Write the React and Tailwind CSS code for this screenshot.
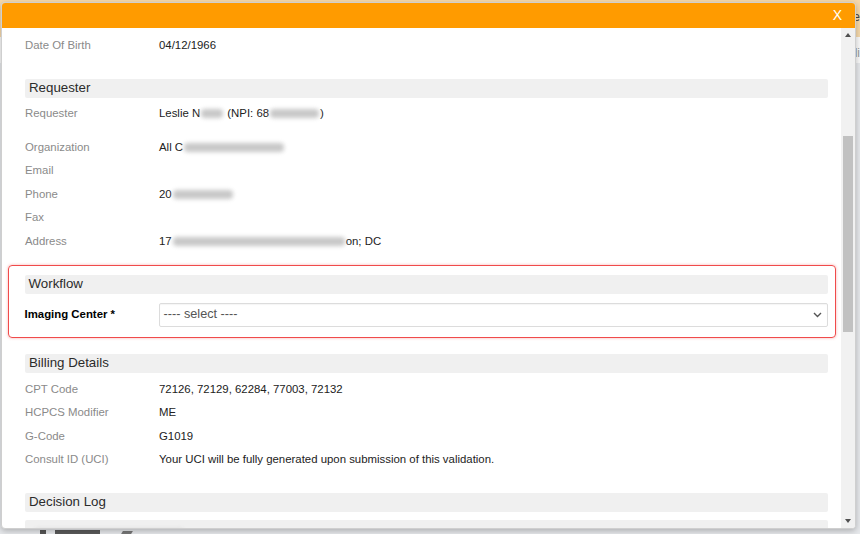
import React from "react";

const Blur = ({ w }) => (
  <span
    className="mx-[1px] inline-block h-[9px] rounded-sm bg-[#c8c8c8] align-middle blur-[2px]"
    style={{ width: w }}
  />
);

function Row({ label, children, className = "" }) {
  return (
    <div className={`flex h-[23.5px] items-center ${className}`}>
      <div className="w-[134px] shrink-0 text-[#8a8a8a]">{label}</div>
      <div className="text-[#222]">{children}</div>
    </div>
  );
}

function SectionHead({ title }) {
  return (
    <div className="flex h-[19px] items-center rounded-[2px] bg-[#f0f0f0] pl-[4px] text-[13.3px] text-[#2b2b2b]">
      {title}
    </div>
  );
}

function Chevron() {
  return (
    <svg width="9" height="6" viewBox="0 0 9 6" fill="none">
      <path d="M1 1l3.5 3.5L8 1" stroke="#555" strokeWidth="1.4" />
    </svg>
  );
}

export default function App() {
  return (
    <div
      className="relative h-[534px] w-[860px] overflow-hidden bg-[#e7e9ec] text-[11.4px]"
      style={{ fontFamily: '"Liberation Sans", Arial, sans-serif' }}
    >
      {/* page behind the dialog */}
      <div className="absolute left-0 top-0 h-[37px] w-full bg-[#f6d9ac]" />
      <div className="absolute left-0 top-[37px] h-[26px] w-full bg-[#fafafa]" />
      <div className="absolute right-[0px] top-[8px] text-[12px] text-[#444]">le</div>
      <div className="absolute right-[0px] top-[44px] text-[12px] text-[#999]">di</div>
      <div className="absolute bottom-0 left-[40px] h-[4px] w-[6px] bg-[#555]" />
      <div className="absolute bottom-0 left-[55px] h-[4px] w-[45px] bg-[#5a5a5a]" />
      <div className="absolute bottom-0 left-[122px] h-[3px] w-[10px] -skew-x-[30deg] bg-[#777]" />

      {/* dialog */}
      <div className="absolute left-[1px] top-[2px] z-10 flex h-[527px] w-[855px] flex-col overflow-hidden rounded-[4px] border border-[#cfcfcf] bg-white shadow-[0_2px_6px_rgba(0,0,0,0.25)]">
        <div className="flex h-[25px] shrink-0 items-center justify-end bg-[#ff9b00] pr-[13px]">
          <span className="text-[14px] text-white">X</span>
        </div>

        <div className="flex min-h-0 flex-1">
          <div className="min-w-0 flex-1 overflow-hidden pl-[23px] pr-[13px] pt-[6px]">
            <Row label="Date Of Birth">04/12/1966</Row>

            <div className="mt-[21px]">
              <SectionHead title="Requester" />
              <div className="pt-[4px]">
                <Row label="Requester" className="mb-[10.5px]">
                  Leslie N
                  <Blur w={22} /> (NPI: 68
                  <Blur w={49} />)
                </Row>
                <Row label="Organization">
                  All C<Blur w={100} />
                </Row>
                <Row label="Email" />
                <Row label="Phone">
                  20<Blur w={60} />
                </Row>
                <Row label="Fax" />
                <Row label="Address">
                  17<Blur w={172} />
                  on; DC
                </Row>
              </div>
            </div>

            <div className="-ml-[17px] -mr-[8px] mt-[12px] rounded-[4px] border-[1.5px] border-[#f04b4b] pb-[10px] pl-[15.5px] pr-[7.5px] pt-[8.5px] shadow-[0_0_3px_rgba(240,75,75,0.45)]">
              <SectionHead title="Workflow" />
              <div className="mt-[9px] flex items-center">
                <div className="w-[134px] shrink-0 font-bold text-black">Imaging Center *</div>
                <div className="flex h-[24px] flex-1 items-center justify-between rounded-[2px] border border-[#dcdcdc] pl-[4px] pr-[5px] shadow-[inset_0_1px_1px_rgba(0,0,0,0.04)]">
                  <span className="text-[12.7px] text-[#555]">---- select ----</span>
                  <Chevron />
                </div>
              </div>
            </div>

            <div className="mt-[16px]">
              <SectionHead title="Billing Details" />
              <div className="pt-[5px]">
                <Row label="CPT Code">72126, 72129, 62284, 77003, 72132</Row>
                <Row label="HCPCS Modifier">ME</Row>
                <Row label="G-Code">G1019</Row>
                <Row label="Consult ID (UCI)">
                  Your UCI will be fully generated upon submission of this validation.
                </Row>
              </div>
            </div>

            <div className="mt-[21px]">
              <SectionHead title="Decision Log" />
              <div className="mt-[8px] flex h-[30px] items-start rounded-[2px] bg-[#f0f0f0] pl-[9px] pt-[9px]">
                <span className="inline-block h-[9px] w-[150px] rounded-sm bg-[#d6d6d6] blur-[2px]" />
              </div>
            </div>
          </div>

          {/* scrollbar */}
          <div className="flex w-[14px] shrink-0 flex-col items-center bg-[#f1f1f1]">
            <div className="flex h-[14px] items-center justify-center">
              <div className="h-0 w-0 border-x-[3.5px] border-b-[4px] border-x-transparent border-b-[#505050]" />
            </div>
            <div className="mt-[94px] h-[196px] w-[10px] bg-[#c1c1c1]" />
            <div className="flex-1" />
            <div className="flex h-[14px] items-center justify-center">
              <div className="h-0 w-0 border-x-[3.5px] border-t-[4px] border-x-transparent border-t-[#505050]" />
            </div>
          </div>
        </div>
      </div>
    </div>
  );
}
